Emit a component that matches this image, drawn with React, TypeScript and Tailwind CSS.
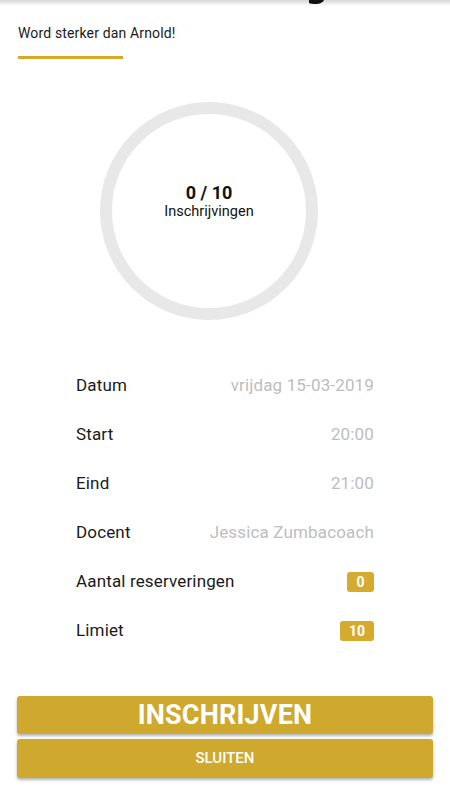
import React from 'react';

interface DetailRow {
    label: string;
    value: string;
    badge?: boolean;
}

const rows: DetailRow[] = [
    { label: 'Datum', value: 'vrijdag 15-03-2019' },
    { label: 'Start', value: '20:00' },
    { label: 'Eind', value: '21:00' },
    { label: 'Docent', value: 'Jessica Zumbacoach' },
    { label: 'Aantal reserveringen', value: '0', badge: true },
    { label: 'Limiet', value: '10', badge: true },
];

const App: React.FC = () => {
    return (
        <div className="relative w-[450px] h-[800px] bg-white overflow-hidden font-['Roboto',sans-serif] text-[#212121]">
            {/* Header shadow, header itself scrolled out of view */}
            <div className="relative h-[6px] bg-gradient-to-b from-[#d6d6d6] to-white">
                <svg className="absolute left-[306px] top-0" width="20" height="5" viewBox="0 0 20 5">
                    <path d="M3 0 L18 0 C17 2 15 3.5 11 4 C8 4.3 5 3.8 3 3 Z" fill="#111" />
                </svg>
            </div>

            {/* Title */}
            <div className="px-[18px] pt-[19px]">
                <p className="text-[14px] leading-[17px] tracking-[0.15px] text-[#1a1a1a]">Word sterker dan Arnold!</p>
                <div className="mt-[14px] w-[105px] h-[3px] bg-[#d6a92a]" />
            </div>

            {/* Progress circle */}
            <div className="pl-[100px] pt-[43px]">
                <div className="w-[218px] h-[218px] rounded-full border-[12px] border-[#e8e8e8] flex flex-col items-center justify-center">
                    <span className="text-[18px] leading-[20px] font-bold text-[#111] mt-[-18px]">0 / 10</span>
                    <span className="text-[14.5px] leading-[18px] text-[#111]">Inschrijvingen</span>
                </div>
            </div>

            {/* Details */}
            <div className="pl-[76px] pr-[76px] pt-[56px] flex flex-col gap-[29px]">
                {rows.map((row) => (
                    <div key={row.label} className="flex items-center justify-between h-[20px]">
                        <span className="text-[17px] tracking-[0.15px] text-[#1a1a1a]">{row.label}</span>
                        {row.badge ? (
                            <span className="min-w-[27px] h-[20px] px-[9px] rounded-[3px] bg-[#d4aa2f] text-white text-[14px] font-bold flex items-center justify-center">
                                {row.value}
                            </span>
                        ) : (
                            <span className="text-[17px] tracking-[0.15px] text-[#bdbdbd]">{row.value}</span>
                        )}
                    </div>
                ))}
            </div>

            {/* Buttons */}
            <div className="px-[17px] pt-[55px] flex flex-col gap-[5px]">
                <button className="h-[38px] rounded-[3px] bg-[#cfa82e] text-white text-[27px] font-bold tracking-[0.2px] shadow-[0_2px_3px_rgba(0,0,0,0.3)] flex items-center justify-center">
                    INSCHRIJVEN
                </button>
                <button className="h-[39px] rounded-[3px] bg-[#cfa82e] text-white text-[15px] font-medium shadow-[0_2px_3px_rgba(0,0,0,0.3)] flex items-center justify-center">
                    SLUITEN
                </button>
            </div>
        </div>
    );
};

export default App;
